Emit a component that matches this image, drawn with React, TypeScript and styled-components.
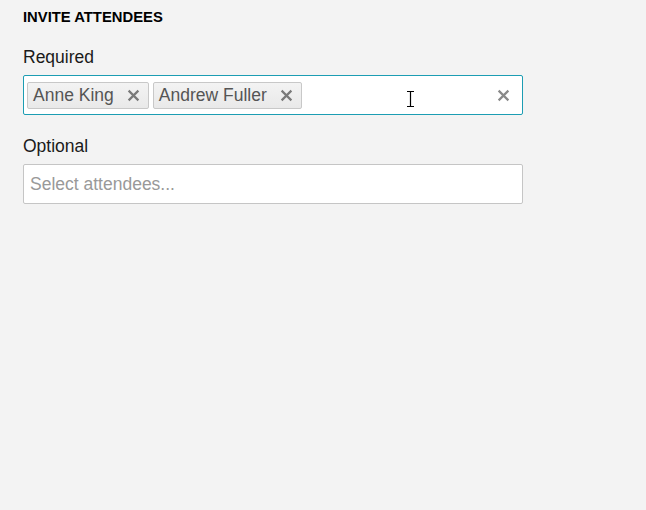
import React from "react";
import styled, {createGlobalStyle} from "styled-components";

const GlobalStyle = createGlobalStyle`
  html, body {
    margin: 0;
    padding: 0;
    background: #f3f3f3;
    font-family: "Liberation Sans", Arial, sans-serif;
  }
`;

const attendees = ["Anne King", "Andrew Fuller"];

const CloseIcon = ({size = 12, color = "#7a7a7a"}: { size?: number, color?: string }) =>
  <svg width={size} height={size} viewBox="0 0 12 12">
    <path d="M1.5 1.5l9 9M10.5 1.5l-9 9" stroke={color} strokeWidth="2" fill="none"/>
  </svg>;

export default function App() {
  return <Page>
    <GlobalStyle/>
    <Title>Invite Attendees</Title>
    <Label>Required</Label>
    <MultiSelect $focused>
      {attendees.map(name =>
        <Chip key={name}>
          <ChipText>{name}</ChipText>
          <IconSlot><CloseIcon size={13}/></IconSlot>
        </Chip>
      )}
      <Spacer/>
      <ClearButton><CloseIcon size={13} color="#8a8a8a"/></ClearButton>
      <Cursor width="9" height="16" viewBox="0 0 9 16">
        <path d="M1 0.5h7M4.5 0.5v15M1 15.5h7" stroke="#000" strokeWidth="1.2" fill="none"/>
      </Cursor>
    </MultiSelect>
    <Label>Optional</Label>
    <MultiSelect>
      <Placeholder>Select attendees...</Placeholder>
    </MultiSelect>
  </Page>
}

const Page = styled.div`
  width: 646px;
  height: 510px;
  box-sizing: border-box;
  padding: 9px 23px;
  display: flex;
  flex-direction: column;
`;

const Title = styled.h3`
  margin: 0 0 19px;
  font-size: 14.8px;
  font-weight: bold;
  text-transform: uppercase;
  color: #000;
  line-height: 17px;
`;

const Label = styled.div`
  font-size: 17.5px;
  color: #1a1a1a;
  line-height: 20px;
  padding-top: 2px;
  margin-bottom: 8px;
`;

const MultiSelect = styled.div<{ $focused?: boolean }>`
  position: relative;
  width: 500px;
  height: 40px;
  box-sizing: border-box;
  background: #fff;
  border: 1px solid ${p => p.$focused ? "#1c9db3" : "#c5c5c5"};
  border-radius: 2px;
  display: flex;
  align-items: center;
  gap: 4px;
  padding: 0 3px;
  margin-bottom: 19px;
`;

const Chip = styled.div`
  height: 27px;
  box-sizing: border-box;
  display: flex;
  align-items: center;
  gap: 13px;
  padding: 0 8px 0 5px;
  background: linear-gradient(#f3f3f3, #e9e9e9);
  border: 1px solid #c8c8c8;
  border-radius: 2px;
  color: #555;
  font-size: 17.5px;
`;

const ChipText = styled.span`
  line-height: 20px;
`;

const IconSlot = styled.span`
  display: flex;
  align-items: center;
`;

const Spacer = styled.div`
  flex: 1;
`;

const ClearButton = styled.span`
  display: flex;
  align-items: center;
  margin-right: 9px;
`;

const Cursor = styled.svg`
  position: absolute;
  left: 382px;
  top: 15px;
`;

const Placeholder = styled.span`
  font-size: 17.5px;
  color: #999;
  padding-left: 3px;
`;
